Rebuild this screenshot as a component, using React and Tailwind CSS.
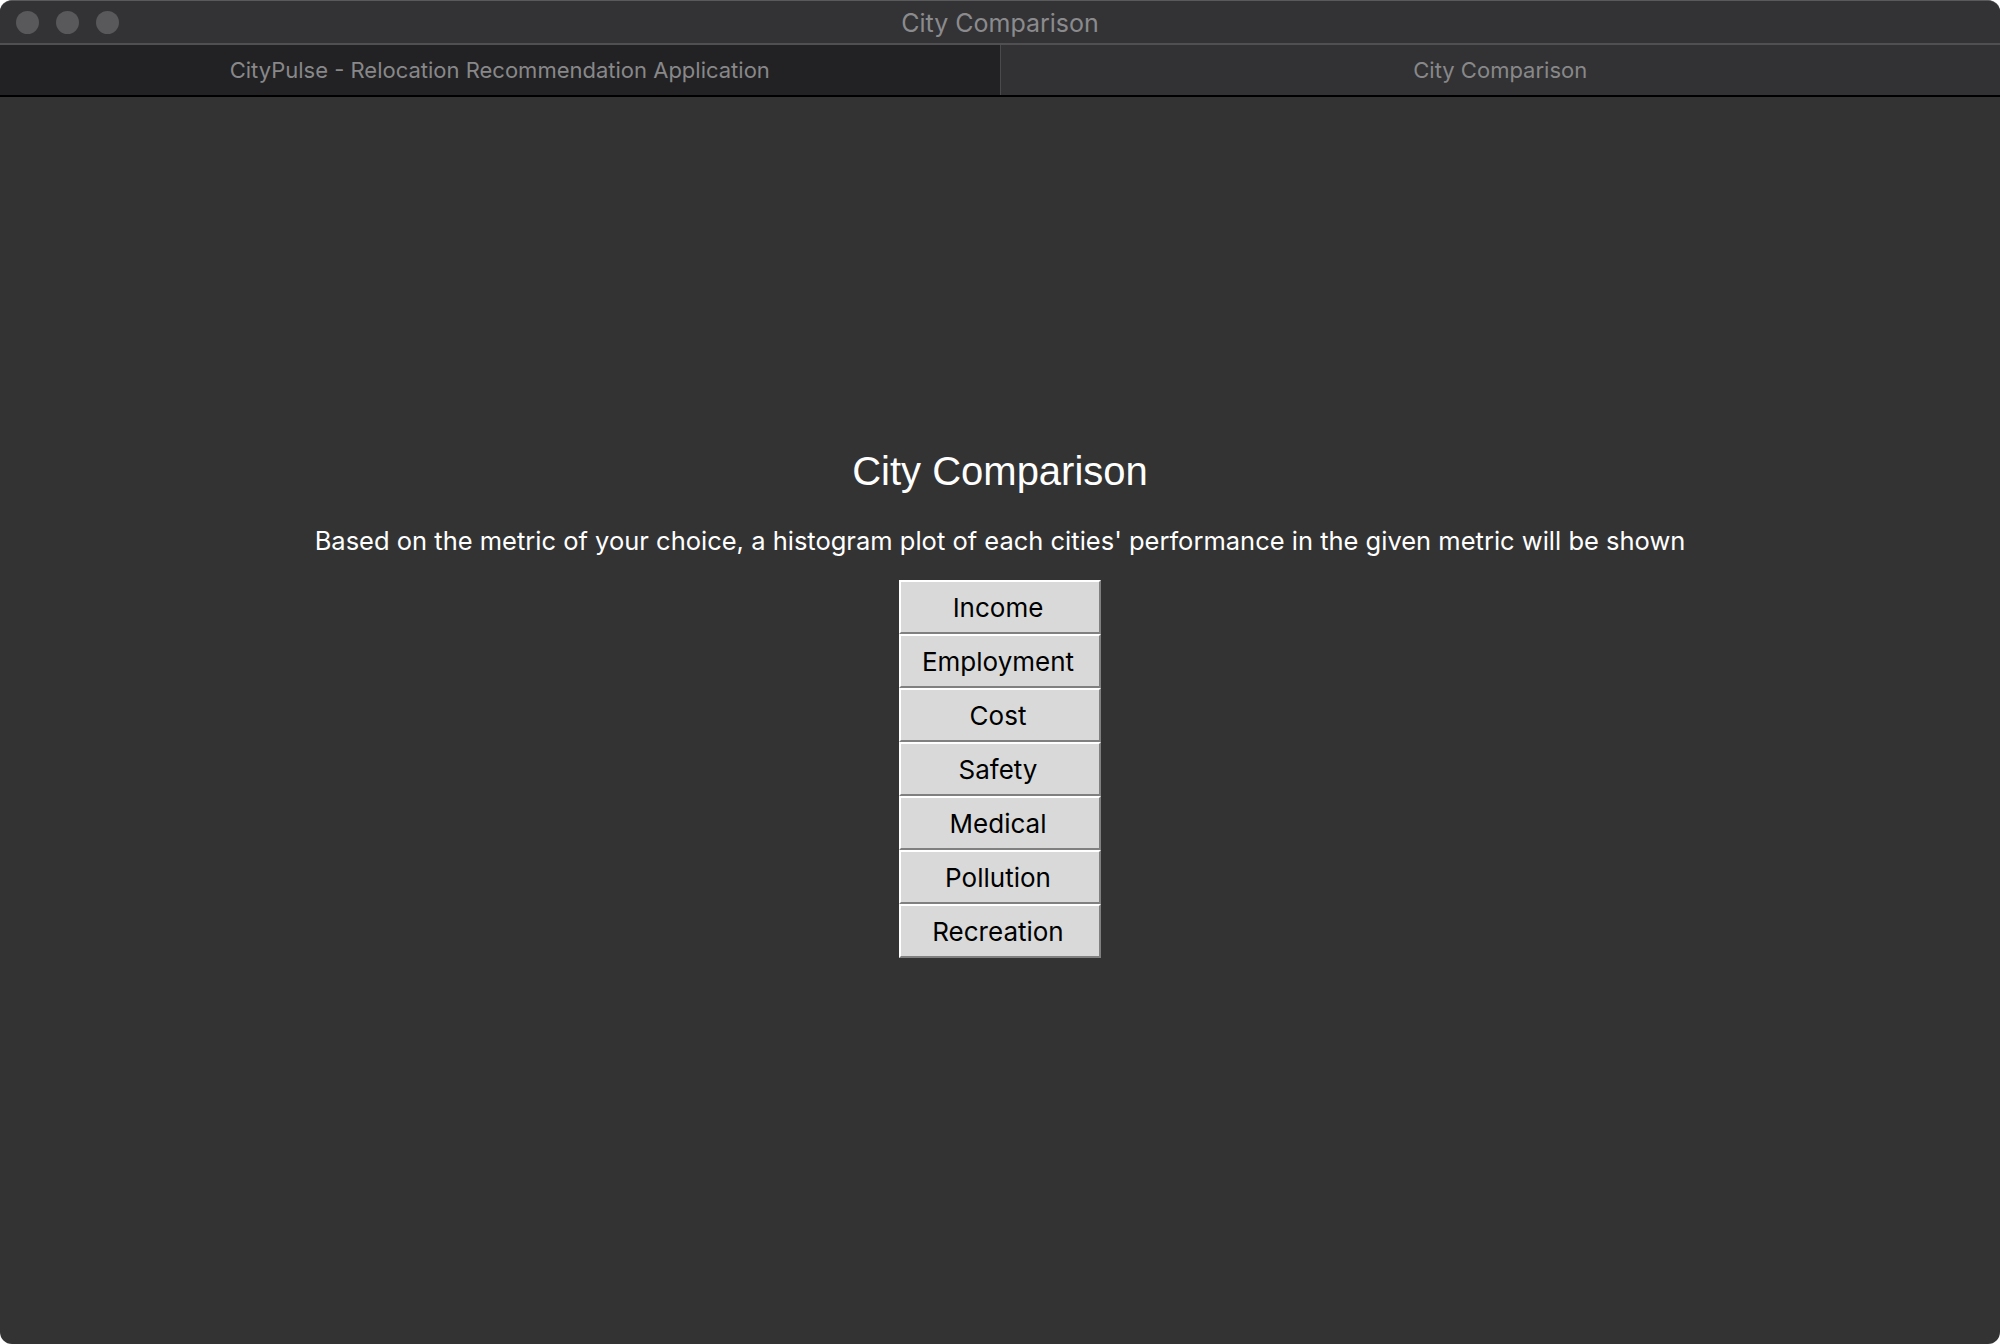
import React from 'react'

const metrics = ['Income', 'Employment', 'Cost', 'Safety', 'Medical', 'Pollution', 'Recreation']

function MetricButton({ label }) {
  return (
    <button className="h-[54px] w-[202px] pr-[4px] bg-[#d9d9d9] border-2 border-t-white border-l-white border-b-[#808080] border-r-[#808080] text-[26px] text-black font-['Inter',sans-serif] flex items-center justify-center">
      {label}
    </button>
  )
}

export default function App() {
  return (
    <div className="w-[2000px] h-[1344px] bg-white">
      <div className="w-full h-full rounded-[12px] overflow-hidden bg-[#333333] flex flex-col border-t border-[#5a5a5c]">
        {/* title bar */}
        <div className="h-[44px] bg-[#333336] flex items-center relative border-b-2 border-[#505052]">
          <div className="flex gap-[17px] pl-[16px]">
            <span className="w-[23px] h-[23px] rounded-full bg-[#59595b]" />
            <span className="w-[23px] h-[23px] rounded-full bg-[#59595b]" />
            <span className="w-[23px] h-[23px] rounded-full bg-[#59595b]" />
          </div>
          <div className="absolute inset-0 pt-[3px] flex items-center justify-center text-[25px] text-[#8b8b8d] font-['Inter',sans-serif]">
            City Comparison
          </div>
        </div>

        {/* tabs */}
        <div className="h-[52px] flex border-b-2 border-black font-['Inter',sans-serif] text-[22px] text-[#88888a]">
          <div className="flex-1 bg-[#222224] flex items-center justify-center border-r border-[#4a4a4c]">
            CityPulse - Relocation Recommendation Application
          </div>
          <div className="flex-1 bg-[#323234] flex items-center justify-center">
            City Comparison
          </div>
        </div>

        {/* content */}
        <div className="flex-1 flex flex-col items-center pt-[350px]">
          <h1 className="text-[40px] leading-[48px] text-white font-['Liberation_Sans',sans-serif]">City Comparison</h1>
          <p className="mt-[29px] text-[25.5px] leading-[34px] text-white font-['Inter',sans-serif]">
            Based on the metric of your choice, a histogram plot of each cities' performance in the given metric will be shown
          </p>
          <div className="mt-[22px] flex flex-col">
            {metrics.map(m => <MetricButton key={m} label={m} />)}
          </div>
        </div>
      </div>
    </div>
  )
}
